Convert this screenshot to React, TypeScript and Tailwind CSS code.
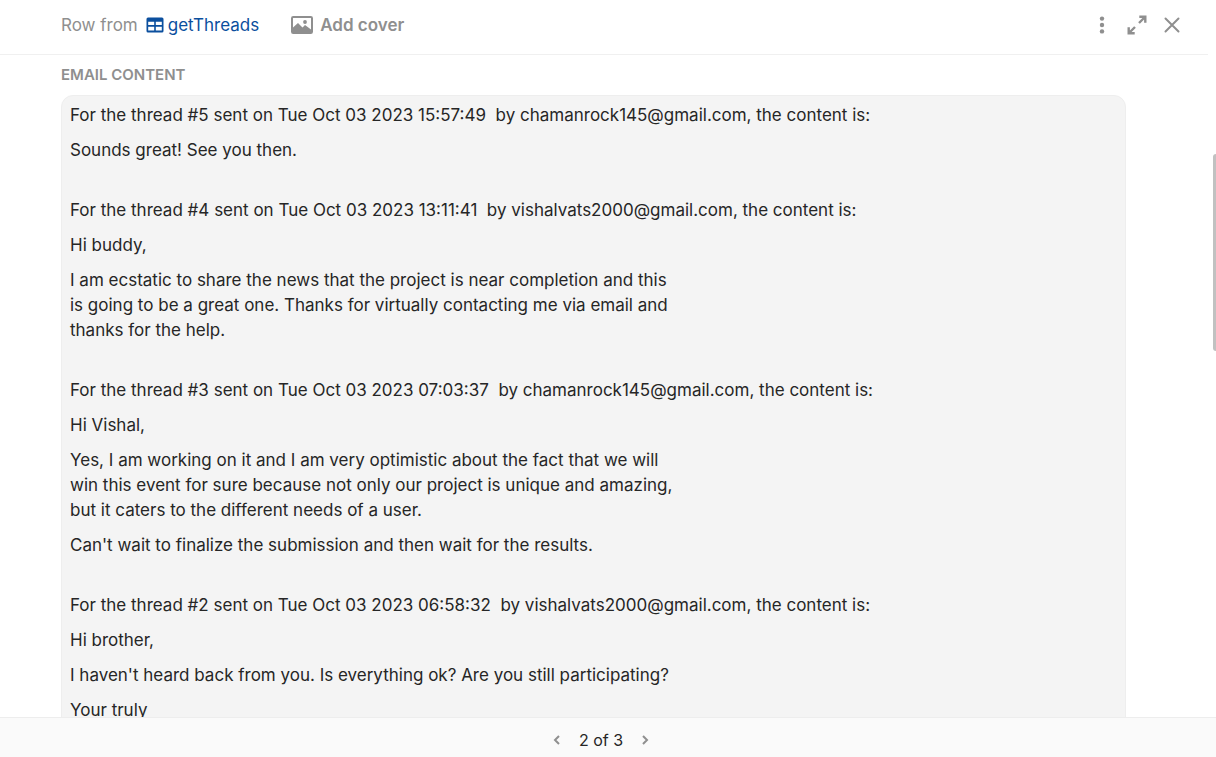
import { useState } from "react"

type Thread = {
  id: number
  date: string
  sender: string
  paragraphs: string[][]
}

const THREADS: Thread[] = [
  {
    id: 5,
    date: "Tue Oct 03 2023 15:57:49",
    sender: "chamanrock145@gmail.com",
    paragraphs: [["Sounds great! See you then."]],
  },
  {
    id: 4,
    date: "Tue Oct 03 2023 13:11:41",
    sender: "vishalvats2000@gmail.com",
    paragraphs: [
      ["Hi buddy,"],
      [
        "I am ecstatic to share the news that the project is near completion and this",
        "is going to be a great one. Thanks for virtually contacting me via email and",
        "thanks for the help.",
      ],
    ],
  },
  {
    id: 3,
    date: "Tue Oct 03 2023 07:03:37",
    sender: "chamanrock145@gmail.com",
    paragraphs: [
      ["Hi Vishal,"],
      [
        "Yes, I am working on it and I am very optimistic about the fact that we will",
        "win this event for sure because not only our project is unique and amazing,",
        "but it caters to the different needs of a user.",
      ],
      ["Can't wait to finalize the submission and then wait for the results."],
    ],
  },
  {
    id: 2,
    date: "Tue Oct 03 2023 06:58:32",
    sender: "vishalvats2000@gmail.com",
    paragraphs: [
      ["Hi brother,"],
      ["I haven't heard back from you. Is everything ok? Are you still participating?"],
      ["Your truly"],
    ],
  },
]

const TOTAL_ROWS = 3

function TableIcon() {
  return (
    <svg width="18" height="16" viewBox="0 0 18 16" aria-hidden="true">
      <path
        fill="currentColor"
        fillRule="evenodd"
        d="M2 0.500h14a1.500 1.500 0 0 1 1.500 1.500v12a1.500 1.500 0 0 1-1.500 1.500H2A1.500 1.500 0 0 1 .5 14V2A1.500 1.500 0 0 1 2 .5zM2.200 4.800v3.200h6V4.800zM9.800 4.800v3.200h6V4.800zM2.200 9.800v3.700h6V9.800zM9.800 9.800v3.700h6V9.800z"
      />
    </svg>
  )
}

function ImageIcon() {
  return (
    <svg width="22" height="18" viewBox="0 0 22 18" fill="none" aria-hidden="true">
      <rect x="1" y="1" width="20" height="16" rx="1.200" stroke="currentColor" strokeWidth="2" />
      <path d="M2 16v-4.500l5-4.500 4.500 4.500 2.500-2.500 6 4.500v2.500z" fill="currentColor" />
      <circle cx="14" cy="6" r="1.900" fill="currentColor" />
    </svg>
  )
}

function DotsIcon() {
  return (
    <svg width="6" height="18" viewBox="0 0 6 18" fill="currentColor" aria-hidden="true">
      <circle cx="3" cy="2.600" r="2.200" />
      <circle cx="3" cy="9" r="2.200" />
      <circle cx="3" cy="15.400" r="2.200" />
    </svg>
  )
}

function ExpandIcon() {
  return (
    <svg width="20" height="20" viewBox="0 0 20 20" fill="none" stroke="currentColor" strokeWidth="2.400" aria-hidden="true">
      <path d="M12.300 1.700h6v6M18 2l-6 6M7.700 18.300H1.700v-6M2 18l6-6" />
    </svg>
  )
}

function CloseIcon() {
  return (
    <svg width="16" height="16" viewBox="0 0 16 16" fill="none" stroke="currentColor" strokeWidth="2" strokeLinecap="round" aria-hidden="true">
      <path d="M1.500 1.500l13 13M14.500 1.500l-13 13" />
    </svg>
  )
}

export default function App() {
  const [row, setRow] = useState(2)

  return (
    <div className="relative flex h-screen flex-col bg-white font-['Inter',sans-serif] text-[17px] text-[#262626]">
      <header className="mr-2 flex h-[55px] shrink-0 items-start justify-between border-b border-[#f0f0f0] pt-3 pr-7 pl-[61px] text-[#8f8f8f]">
        <div className="flex items-center gap-8">
          <div className="flex items-center leading-6">
            <span>Row from</span>
            <a href="#getThreads" className="ml-2 flex items-center gap-1 text-[#0b4f9e]">
              <TableIcon />
              getThreads
            </a>
          </div>
          <button type="button" className="flex items-center gap-[7px] leading-[26px] font-semibold">
            <ImageIcon />
            Add cover
          </button>
        </div>
        <div className="flex h-[26px] items-center">
          <button type="button" aria-label="More options" className="mr-[22px]">
            <DotsIcon />
          </button>
          <button type="button" aria-label="Expand" className="mr-[17px]">
            <ExpandIcon />
          </button>
          <button type="button" aria-label="Close">
            <CloseIcon />
          </button>
        </div>
      </header>

      <main className="min-h-0 flex-1 overflow-y-auto pr-[90px] pl-[61px] [scrollbar-width:none]">
        <h2 className="pt-2 pb-2 text-[15px] leading-6 font-semibold text-[#8f8f8f] uppercase">Email content</h2>
        <div className="flex flex-col gap-[35px] rounded-xl border border-[#eeeeee] bg-[#f4f4f4] px-2 pt-[7px] pb-4 leading-[25px]">
          {THREADS.map((t) => (
            <section key={t.id} className="space-y-[10px]">
              <p>
                For the thread #{t.id} sent on {t.date}&nbsp; by {t.sender}, the content is:
              </p>
              {t.paragraphs.map((lines) => (
                <p key={lines[0]}>
                  {lines.map((line) => (
                    <span key={line} className="block">{line}</span>
                  ))}
                </p>
              ))}
            </section>
          ))}
        </div>
      </main>

      {/* Scroll thumb */}
      <div className="absolute top-[154px] right-0 h-[197px] w-[3px] rounded-l-full bg-[#c1c1c1]" />

      <footer className="flex h-10 shrink-0 items-center justify-center border-t border-[#ededed] bg-[#fafafa] pt-[5px] pr-[14px] text-base">
        <button
          type="button"
          aria-label="Previous row"
          onClick={() => setRow((r) => Math.max(1, r - 1))}
          className="text-[#8f8f8f]"
        >
          <svg width="8" height="10" viewBox="0 0 8 10" fill="none" stroke="currentColor" strokeWidth="2" aria-hidden="true">
            <path d="M6 1L2 5l4 4" />
          </svg>
        </button>
        <span className="mx-[18px]">{row} of {TOTAL_ROWS}</span>
        <button
          type="button"
          aria-label="Next row"
          onClick={() => setRow((r) => Math.min(TOTAL_ROWS, r + 1))}
          className="text-[#8f8f8f]"
        >
          <svg width="8" height="10" viewBox="0 0 8 10" fill="none" stroke="currentColor" strokeWidth="2" aria-hidden="true">
            <path d="M2 1l4 4-4 4" />
          </svg>
        </button>
      </footer>
    </div>
  )
}
